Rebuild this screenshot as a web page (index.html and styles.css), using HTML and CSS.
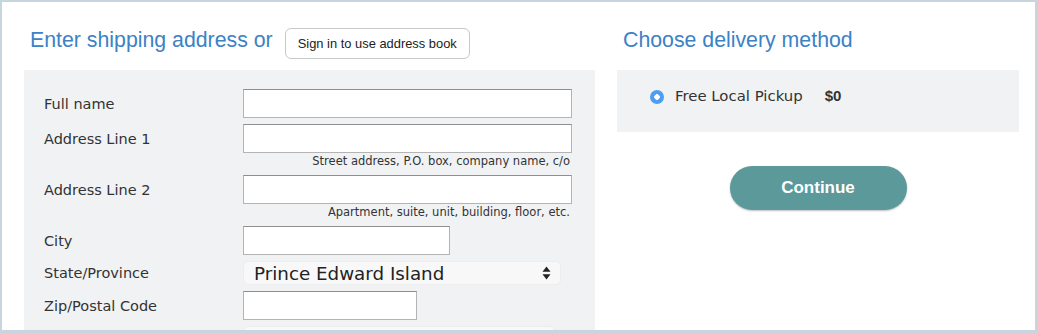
FILE: index.html
```html
<!DOCTYPE html>
<html lang="en">

<head>
    <meta charset="UTF-8">
    <meta name="viewport" content="width=device-width, initial-scale=1.0">
    <title>Checkout - Shipping</title>
    <link rel="stylesheet" href="styles.css">
</head>

<body>
    <div class="frame">
        <!-- 左侧：收货地址 -->
        <div class="shipping">
            <div class="colhead">
                <h2 class="heading">Enter shipping address or</h2>
                <button class="signin">Sign in to use address book</button>
            </div>

            <div class="addrpanel">
                <label class="flabel" for="fullName">Full name</label>
                <input class="finput" id="fullName">

                <label class="flabel" for="addr1">Address Line 1</label>
                <input class="finput" id="addr1">
                <p class="hint">Street address, P.O. box, company name, c/o</p>

                <label class="flabel" for="addr2">Address Line 2</label>
                <input class="finput" id="addr2">
                <p class="hint">Apartment, suite, unit, building, floor, etc.</p>

                <label class="flabel" for="city">City</label>
                <input class="finput finput-city" id="city">

                <label class="flabel">State/Province</label>
                <div class="fselect">
                    <span>Prince Edward Island</span>
                    <svg width="9" height="14" viewBox="0 0 9 14">
                        <path d="M4.5 0.5 L8.5 5.8 L0.5 5.8 Z" fill="#222"/>
                        <path d="M4.5 13.5 L8.5 8.2 L0.5 8.2 Z" fill="#222"/>
                    </svg>
                </div>

                <label class="flabel" for="zip">Zip/Postal Code</label>
                <input class="finput finput-zip" id="zip">

                <span class="flabel"></span>
                <div class="fselect fselect-country"></div>
            </div>
        </div>

        <!-- 右侧：配送方式 -->
        <div class="delivery">
            <div class="colhead">
                <h2 class="heading">Choose delivery method</h2>
            </div>

            <div class="shippanel">
                <div class="shipopt">
                    <span class="radio"></span>
                    <span class="optname">Free Local Pickup</span>
                    <span class="optprice">$0</span>
                </div>
            </div>

            <div class="actions">
                <button class="continue">Continue</button>
            </div>
        </div>
    </div>
</body>

</html>
```

FILE: styles.css
```css
body {
    margin: 0;
    background-color: #fff;
    color: #333;
    font-family: "DejaVu Sans", sans-serif;
}

.frame {
    width: 1038px;
    height: 333px;
    box-sizing: border-box;
    border: 2px solid #c7d5df;
    border-right-width: 3px;
    border-bottom-width: 3px;
    padding-left: 22px;
    display: flex;
    gap: 22px;
    overflow: hidden;
    background-color: #fff;
}

.shipping {
    width: 571px;
    padding-top: 26px;
}

.delivery {
    width: 402px;
    padding-top: 26px;
}

.colhead {
    display: flex;
    align-items: flex-start;
    height: 31px;
    margin-bottom: 11px;
}

.heading {
    margin: 0;
    padding-left: 6px;
    font-family: "Liberation Sans", Arial, sans-serif;
    font-size: 21.3px;
    font-weight: normal;
    line-height: 25px;
    color: #3b82c6;
}

.signin {
    margin-left: 12px;
    height: 31px;
    padding: 0 12px;
    border: 1px solid #c8c8c8;
    border-radius: 6px;
    background-color: #fff;
    font-family: "Liberation Sans", Arial, sans-serif;
    font-size: 12.9px;
    color: #222;
}

/* 地址表单 */
.addrpanel {
    height: 300px;
    box-sizing: border-box;
    padding: 19px 23px 0 20px;
    background-color: #f1f2f4;
    display: grid;
    grid-template-columns: 199px 329px;
    row-gap: 6px;
    align-items: center;
    align-content: start;
}

.flabel {
    font-size: 14.5px;
    line-height: 18px;
    color: #333;
}

.finput {
    width: 329px;
    height: 29px;
    box-sizing: border-box;
    margin: 0;
    border: 1px solid #b4b4b4;
    border-top-color: #8f8f8f;
    background-color: #fff;
    outline: none;
}

.finput-city {
    width: 207px;
}

.finput-zip {
    width: 174px;
}

.hint {
    grid-column: 2;
    margin: -5px 0 0;
    padding-right: 2px;
    text-align: right;
    font-size: 11.5px;
    line-height: 15px;
    color: #333;
}

.fselect {
    width: 318px;
    height: 24px;
    box-sizing: border-box;
    padding: 0 9px 0 10px;
    border: 1px solid #ededee;
    border-radius: 5px;
    background-color: #f8f8f9;
    display: flex;
    align-items: center;
    justify-content: space-between;
    font-size: 18.3px;
    color: #222;
}

.fselect-country {
    width: 312px;
}

/* 配送方式 */
.shippanel {
    height: 62px;
    box-sizing: border-box;
    padding: 20px 33px 0;
    background-color: #f1f2f4;
}

.shipopt {
    display: flex;
    align-items: center;
    height: 14px;
    font-size: 14.9px;
    line-height: 14px;
    color: #333;
}

.radio {
    width: 14px;
    height: 14px;
    box-sizing: border-box;
    border-radius: 50%;
    background: radial-gradient(circle, #fff 0 2.5px, #4d9df3 3px);
    margin-right: 11px;
}

.optname {
    margin-top: -2px;
}

.optprice {
    margin: -2px 0 0 22px;
    font-family: "Liberation Sans", Arial, sans-serif;
    font-weight: bold;
    font-size: 15px;
    color: #333;
}

.actions {
    display: flex;
    justify-content: center;
    padding-top: 34px;
}

.continue {
    width: 177px;
    height: 44px;
    border: 0;
    border-radius: 22px;
    background-color: #5b999b;
    box-shadow: 0 1px 2px rgba(0, 0, 0, 0.25);
    color: #fff;
    font-family: "Liberation Sans", Arial, sans-serif;
    font-size: 17px;
    font-weight: bold;
}
```
